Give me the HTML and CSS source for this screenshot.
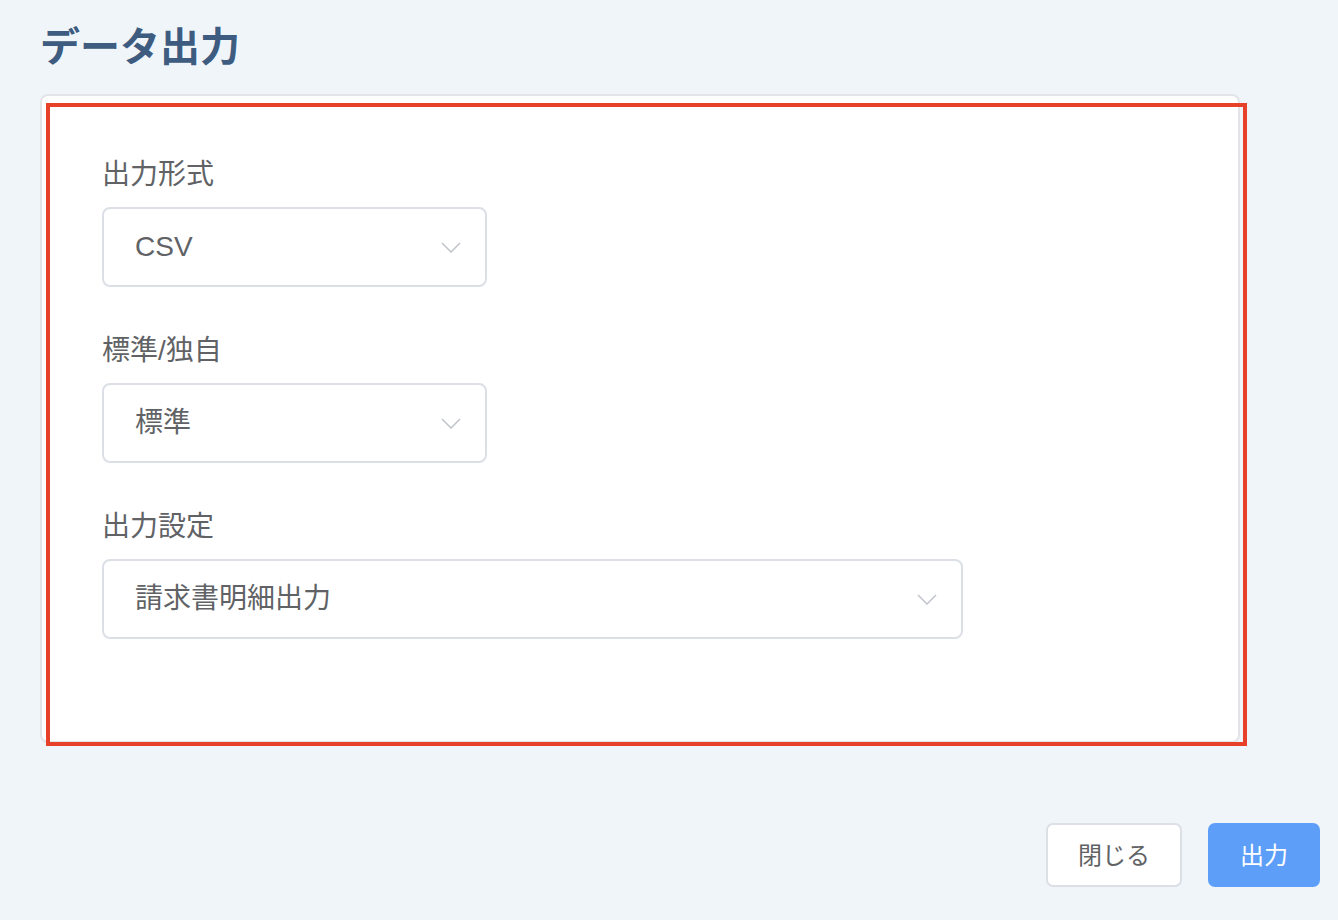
FILE: index.html
```html
<!DOCTYPE html>
<html lang="ja">
<head>
  <meta charset="UTF-8">
  <meta name="viewport" content="width=device-width, initial-scale=1.0">
  <title>データ出力</title>
  <link rel="stylesheet" href="styles.css">
</head>
<body>
  <div class="page">
    <h1 class="title">データ出力</h1>
    <div class="card">
      <div class="form-item">
        <label class="label">出力形式</label>
        <div class="select">
          <span class="value">CSV</span>
          <svg class="arrow" width="20" height="11" viewBox="0 0 20 11"><path d="M1 1 L10 10 L19 1" fill="none" stroke="#c0c4cc" stroke-width="1.5"/></svg>
        </div>
      </div>
      <div class="form-item">
        <label class="label">標準/独自</label>
        <div class="select">
          <span class="value">標準</span>
          <svg class="arrow" width="20" height="11" viewBox="0 0 20 11"><path d="M1 1 L10 10 L19 1" fill="none" stroke="#c0c4cc" stroke-width="1.5"/></svg>
        </div>
      </div>
      <div class="form-item">
        <label class="label">出力設定</label>
        <div class="select wide">
          <span class="value">請求書明細出力</span>
          <svg class="arrow" width="20" height="11" viewBox="0 0 20 11"><path d="M1 1 L10 10 L19 1" fill="none" stroke="#c0c4cc" stroke-width="1.5"/></svg>
        </div>
      </div>
    </div>
    <div class="footer">
      <button class="btn">閉じる</button>
      <button class="btn primary">出力</button>
    </div>
    <div class="highlight"></div>
  </div>
</body>
</html>
```

FILE: styles.css
```css
body {
  margin: 0;
  background-color: #f0f5fa;
  font-family: "Liberation Sans", "Noto Sans CJK JP", sans-serif;
  color: #606266;
}
.page {
  position: relative;
  height: 920px;
  padding: 0 18px 0 40px;
  box-sizing: border-box;
}
.title {
  margin: 0;
  padding-top: 21px;
  height: 72px;
  box-sizing: border-box;
  font-size: 40px;
  line-height: 52px;
  font-weight: 700;
  color: #3d5c80;
}
.card {
  width: 1200px;
  height: 649px;
  box-sizing: border-box;
  margin-top: 22px;
  padding: 59px 60px 0;
  background: #fff;
  border: 2px solid #e2e4e8;
  border-radius: 8px;
}
.form-item {
  margin-bottom: 44px;
}
.label {
  display: block;
  font-size: 28px;
  line-height: 40px;
  margin-bottom: 12px;
  color: #606266;
}
.select {
  display: flex;
  align-items: center;
  justify-content: space-between;
  width: 385px;
  height: 80px;
  box-sizing: border-box;
  padding: 0 24px 0 31px;
  border: 2px solid #dcdfe6;
  border-radius: 8px;
  background: #fff;
}
.select.wide {
  width: 861px;
}
.value {
  font-size: 28px;
  line-height: 40px;
  color: #606266;
}
.arrow {
  display: block;
}
.footer {
  display: flex;
  justify-content: flex-end;
  gap: 26px;
  margin-top: 80px;
}
.btn {
  width: 136px;
  height: 64px;
  padding: 0 0 4px;
  font-family: inherit;
  font-size: 24px;
  color: #606266;
  background: #fff;
  border: 2px solid #dcdfe6;
  border-radius: 7px;
}
.btn.primary {
  width: 112px;
  color: #fff;
  background: #5c9ef8;
  border-color: #5c9ef8;
}
.highlight {
  position: absolute;
  left: 46px;
  top: 103px;
  width: 1201px;
  height: 643px;
  box-sizing: border-box;
  border: 4px solid #e8412a;
  pointer-events: none;
}
```
